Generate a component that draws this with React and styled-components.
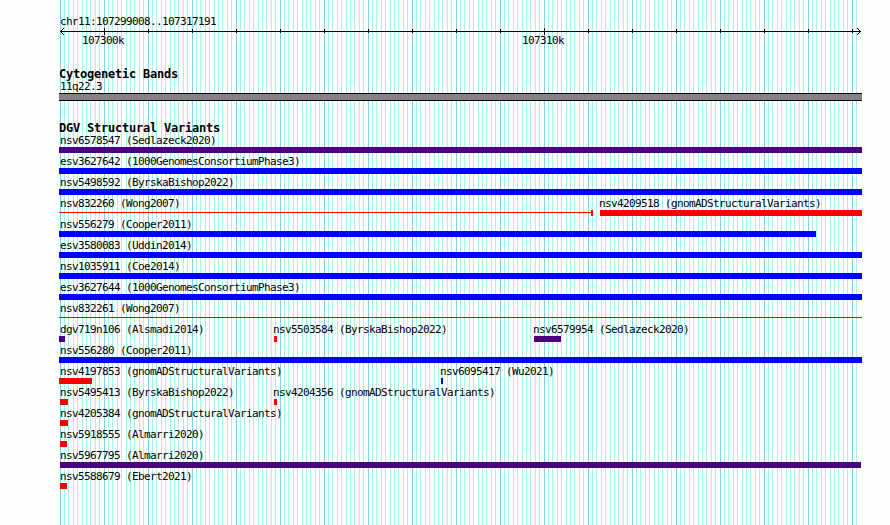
import React from "react";
import styled, { createGlobalStyle } from "styled-components";

const PURPLE = "#4b0082";
const BLUE = "#0000ff";
const RED = "#ff0000";
const DARK_RED = "#e00a10";

const LEFT = 59;
const VIEW_WIDTH = 803;

// x and w are pixels from the left edge of the panel
const tracks = [
  [{ name: "nsv6578547 (Sedlazeck2020)", x: 0, w: 803, color: PURPLE }],
  [{ name: "esv3627642 (1000GenomesConsortiumPhase3)", x: 0, w: 803, color: BLUE }],
  [{ name: "nsv5498592 (ByrskaBishop2022)", x: 0, w: 803, color: BLUE }],
  [
    { name: "nsv832260 (Wong2007)", x: 0, w: 534, color: RED, thin: true, cap: true },
    { name: "nsv4209518 (gnomADStructuralVariants)", x: 541, w: 262, color: RED },
  ],
  [{ name: "nsv556279 (Cooper2011)", x: 0, w: 757, color: BLUE }],
  [{ name: "esv3580083 (Uddin2014)", x: 0, w: 803, color: BLUE }],
  [{ name: "nsv1035911 (Coe2014)", x: 0, w: 803, color: BLUE }],
  [{ name: "esv3627644 (1000GenomesConsortiumPhase3)", x: 0, w: 803, color: BLUE }],
  [{ name: "nsv832261 (Wong2007)", x: 0, w: 803, color: DARK_RED, thin: true }],
  [
    { name: "dgv719n106 (Alsmadi2014)", x: 0, w: 6, color: PURPLE },
    { name: "nsv5503584 (ByrskaBishop2022)", x: 215, w: 3, color: RED },
    { name: "nsv6579954 (Sedlazeck2020)", x: 475, w: 27, color: PURPLE },
  ],
  [{ name: "nsv556280 (Cooper2011)", x: 0, w: 803, color: BLUE }],
  [
    { name: "nsv4197853 (gnomADStructuralVariants)", x: 0, w: 33, color: RED },
    { name: "nsv6095417 (Wu2021)", x: 382, w: 2, color: BLUE },
  ],
  [
    { name: "nsv5495413 (ByrskaBishop2022)", x: 1, w: 8, color: RED },
    { name: "nsv4204356 (gnomADStructuralVariants)", x: 215, w: 3, color: RED },
  ],
  [{ name: "nsv4205384 (gnomADStructuralVariants)", x: 1, w: 8, color: RED }],
  [{ name: "nsv5918555 (Almarri2020)", x: 1, w: 7, color: RED }],
  [{ name: "nsv5967795 (Almarri2020)", x: 1, w: 801, color: PURPLE }],
  [{ name: "nsv5588679 (Ebert2021)", x: 1, w: 7, color: RED }],
];

const gridLines = Array.from({ length: 183 }, (_, i) => ({
  x: 1 + Math.floor((i * 44) / 10),
  major: i % 10 === 0,
})).filter((line) => line.x < 798);

const GlobalStyle = createGlobalStyle`
  body {
    margin: 0;
    background: #fdfffc;
    overflow: hidden;
  }
`;

const Browser = styled.main`
  position: relative;
  box-sizing: border-box;
  width: 890px;
  height: 525px;
  padding: 15px 0 0 ${LEFT}px;
  background: #fdfffc;
  color: #000;
  font-family: "DejaVu Sans Mono", "Liberation Mono", monospace;
  font-size: 11px;
  letter-spacing: -0.622px;
  line-height: 13px;
  white-space: pre;
`;

const Grid = styled.svg`
  position: absolute;
  left: ${LEFT}px;
  top: 0;
`;

const Panel = styled.div`
  position: relative;
  width: ${VIEW_WIDTH}px;
`;

const Label = styled.div`
  height: 13px;
  margin-left: ${({ $shift = 1 }) => $shift}px;
`;

const Title = styled.h2`
  height: 12px;
  margin: 0;
  font-size: 12px;
  font-weight: bold;
  line-height: 12px;
  letter-spacing: -0.224px;
`;

const Ruler = styled.svg`
  display: block;
  margin-top: -1px;
`;

const Ticks = styled.div`
  display: grid;
  grid-template-columns: 440px 1fr;
  height: 34px;
  margin-top: -2px;
  padding-left: 23px;
`;

const Band = styled.div`
  box-sizing: border-box;
  height: 8px;
  margin-bottom: 21px;
  border: solid #000;
  border-width: 1px 0;
  background: #848284;
`;

const Row = styled.div`
  display: grid;
  height: 21px;
`;

const Feature = styled.div`
  grid-area: 1 / 1;
  margin-left: ${({ $x }) => $x}px;
`;

const Bar = styled.div`
  width: ${({ $w }) => $w}px;
  height: ${({ $thin }) => ($thin ? 1 : 6)}px;
  margin-top: ${({ $thin }) => ($thin ? 2 : 0)}px;
  background: ${({ $color }) => $color};
`;

const EndCap = styled.div`
  width: 2px;
  height: 6px;
  margin: -3px 0 0 532px;
  background: ${RED};
`;

// labels start at pixel 60 at the earliest, others hang one pixel before their bar
const labelShift = (x) => {
  if (x === 0) return 1;
  return x === 1 ? 0 : -1;
};

const ScaleBar = () => (
  <Ruler width={VIEW_WIDTH} height="9" shapeRendering="crispEdges">
    <path d="M1 4.5H802" stroke="#000" />
    <path
      d="M1 4h1v1H1zM2 3h1v1H2zM3 2h1v1H3zM4 1h1v1H4zM2 5h1v1H2zM3 6h1v1H3zM4 7h1v1H4zM801 4h1v1h-1zM800 3h1v1h-1zM799 2h1v1h-1zM798 1h1v1h-1zM800 5h1v1h-1zM799 6h1v1h-1zM798 7h1v1h-1z"
    />
    {Array.from({ length: 18 }, (_, i) => {
      const big = i === 0 || i === 10;
      return (
        <rect
          key={i}
          x={45 + i * 44}
          y={big ? 1 : 2}
          width="1"
          height={big ? 7 : 4}
        />
      );
    })}
  </Ruler>
);

const App = () => {
  return (
    <Browser>
      <GlobalStyle />
      <Grid width={VIEW_WIDTH} height="525" shapeRendering="crispEdges">
        {gridLines.map(({ x, major }) => (
          <rect
            key={x}
            x={x}
            y="0"
            width="1"
            height="525"
            fill={major ? "#84cbee" : "#afeeee"}
          />
        ))}
      </Grid>
      <Panel>
        <Label>chr11:107299008..107317191</Label>
        <ScaleBar />
        <Ticks>
          <span>107300k</span>
          <span>107310k</span>
        </Ticks>
        <Title>Cytogenetic Bands</Title>
        <Label>11q22.3</Label>
        <Band />
        <Title>DGV Structural Variants</Title>
        {tracks.map((features, i) => (
          <Row key={i}>
            {features.map(({ name, x, w, color, thin, cap }) => (
              <Feature key={name} $x={x}>
                <Label $shift={labelShift(x)}>{name}</Label>
                <Bar $w={w} $color={color} $thin={thin} />
                {cap && <EndCap />}
              </Feature>
            ))}
          </Row>
        ))}
      </Panel>
    </Browser>
  );
};

export default App;
